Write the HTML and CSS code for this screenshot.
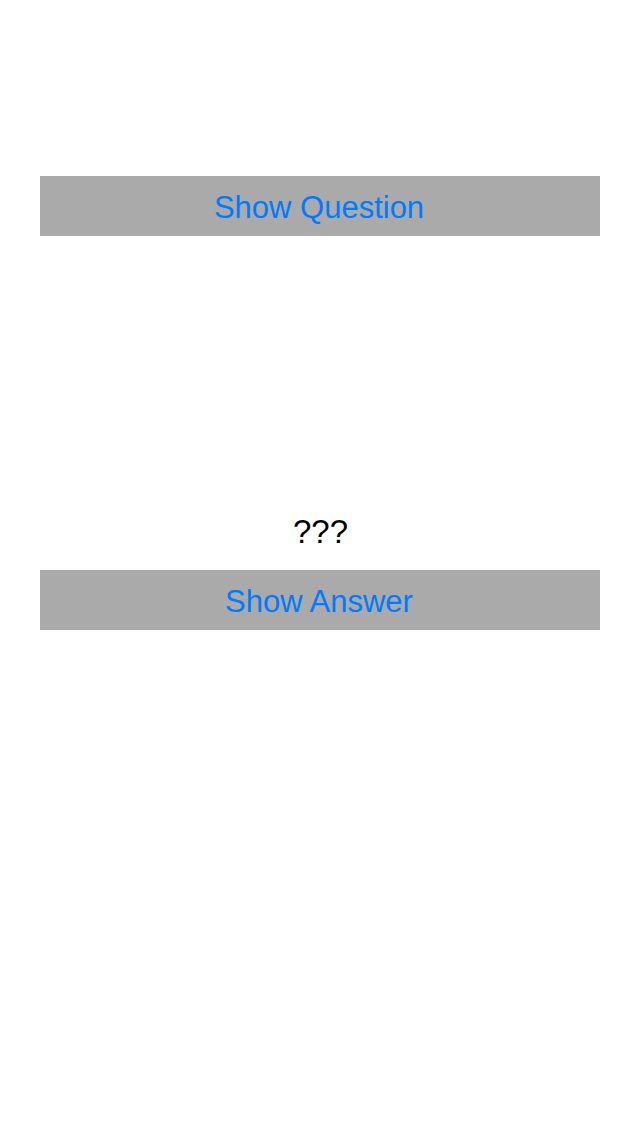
FILE: index.html
```html
<!DOCTYPE html>
<html>
<head>
<meta charset="utf-8">
<link rel="stylesheet" href="styles.css">
</head>
<body>
<main class="screen">
  <button class="action action-question">Show Question</button>
  <div class="label">???</div>
  <button class="action">Show Answer</button>
</main>
</body>
</html>
```
FILE: styles.css
```css
html, body {
  margin: 0;
  padding: 0;
  background: #ffffff;
}
.screen {
  width: 640px;
  height: 1136px;
  display: flex;
  flex-direction: column;
  align-items: center;
  padding-top: 176px;
  box-sizing: border-box;
  font-family: "Liberation Sans", Arial, sans-serif;
}
.action {
  width: 560px;
  height: 60px;
  border: 0;
  margin: 0;
  padding: 3px 2px 0 0;
  box-sizing: border-box;
  background: #aaaaaa;
  color: #007aff;
  font-family: inherit;
  font-size: 31px;
  line-height: 57px;
  text-align: center;
}
.label {
  margin-top: 276px;
  height: 40px;
  line-height: 40px;
  margin-bottom: 18px;
  padding-left: 1px;
  font-size: 33px;
  color: #000000;
  text-align: center;
}
```
